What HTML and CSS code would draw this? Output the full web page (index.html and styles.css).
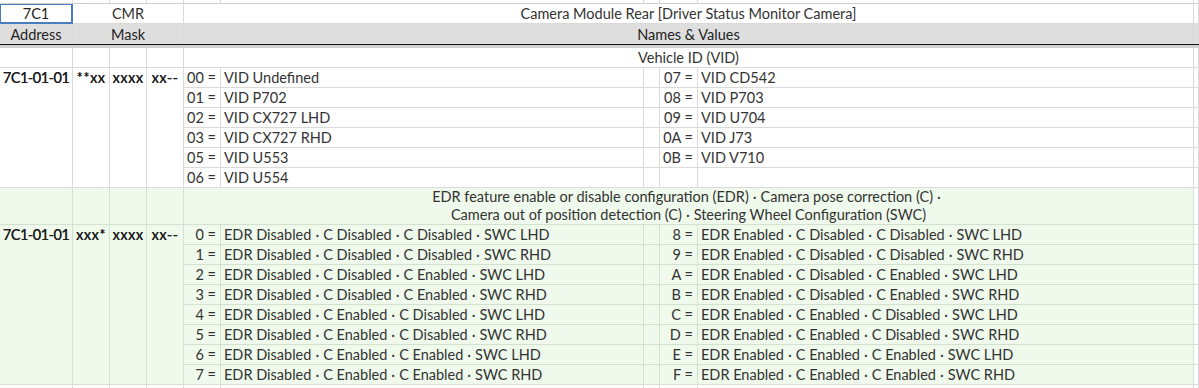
FILE: index.html
```html
<!DOCTYPE html>
<html>
<head>
<meta charset="utf-8">
<link rel="stylesheet" href="styles.css">
</head>
<body>
<div class="sheet">
  <!-- top strip -->
  <div class="c strip"></div><div class="c strip"></div><div class="c strip"></div><div class="c strip"></div><div class="c strip"></div><div class="c strip"></div><div class="c strip"></div><div class="c strip"></div><div class="c strip"></div><div class="c strip"></div>

  <!-- title row -->
  <div class="c ctr sel">7C1</div>
  <div class="c ctr span3">CMR</div>
  <div class="c ctr span5">Camera Module Rear [Driver Status Monitor Camera]</div>
  <div class="c"></div>

  <!-- header row -->
  <div class="c ctr hd">Address</div>
  <div class="c ctr hd span3">Mask</div>
  <div class="c ctr hd span5">Names &amp; Values</div>
  <div class="c hd"></div>

  <!-- separator -->
  <div class="sep"></div>

  <!-- VID heading -->
  <div class="c"></div><div class="c"></div><div class="c"></div><div class="c"></div>
  <div class="c ctr span5">Vehicle ID (VID)</div>
  <div class="c"></div>

  <!-- VID rows -->
  <div class="c ctr k addr top r6">7C1-01-01</div>
  <div class="c ctr k mask top r6">**xx</div>
  <div class="c ctr k mask top r6">xxxx</div>
  <div class="c ctr k mask top r6">xx--</div>
  <div class="c code">00 =</div><div class="c val">VID Undefined</div><div class="c"></div><div class="c code">07 =</div><div class="c val">VID CD542</div><div class="c"></div>
  <div class="c code">01 =</div><div class="c val">VID P702</div><div class="c"></div><div class="c code">08 =</div><div class="c val">VID P703</div><div class="c"></div>
  <div class="c code">02 =</div><div class="c val">VID CX727 LHD</div><div class="c"></div><div class="c code">09 =</div><div class="c val">VID U704</div><div class="c"></div>
  <div class="c code">03 =</div><div class="c val">VID CX727 RHD</div><div class="c"></div><div class="c code">0A =</div><div class="c val">VID J73</div><div class="c"></div>
  <div class="c code">05 =</div><div class="c val">VID U553</div><div class="c"></div><div class="c code">0B =</div><div class="c val">VID V710</div><div class="c"></div>
  <div class="c code">06 =</div><div class="c val">VID U554</div><div class="c"></div><div class="c code"></div><div class="c val"></div><div class="c"></div>

  <!-- EDR heading -->
  <div class="c g"></div><div class="c g"></div><div class="c g"></div><div class="c g"></div>
  <div class="c g ctr span5 two">EDR feature enable or disable configuration (EDR)<span class="d">·</span>Camera pose correction (C)<span class="d">·</span><br>Camera out of position detection (C)<span class="d">·</span>Steering Wheel Configuration (SWC)</div>
  <div class="c"></div>

  <!-- EDR rows -->
  <div class="c g ctr k addr top r8">7C1-01-01</div>
  <div class="c g ctr k mask top r8">xxx*</div>
  <div class="c g ctr k mask top r8">xxxx</div>
  <div class="c g ctr k mask top r8">xx--</div>
  <div class="c g code">0 =</div><div class="c g val">EDR Disabled<span class="d">·</span>C Disabled<span class="d">·</span>C Disabled<span class="d">·</span>SWC LHD</div><div class="c g"></div><div class="c g code">8 =</div><div class="c g val">EDR Enabled<span class="d">·</span>C Disabled<span class="d">·</span>C Disabled<span class="d">·</span>SWC LHD</div><div class="c"></div>
  <div class="c g code">1 =</div><div class="c g val">EDR Disabled<span class="d">·</span>C Disabled<span class="d">·</span>C Disabled<span class="d">·</span>SWC RHD</div><div class="c g"></div><div class="c g code">9 =</div><div class="c g val">EDR Enabled<span class="d">·</span>C Disabled<span class="d">·</span>C Disabled<span class="d">·</span>SWC RHD</div><div class="c"></div>
  <div class="c g code">2 =</div><div class="c g val">EDR Disabled<span class="d">·</span>C Disabled<span class="d">·</span>C Enabled<span class="d">·</span>SWC LHD</div><div class="c g"></div><div class="c g code">A =</div><div class="c g val">EDR Enabled<span class="d">·</span>C Disabled<span class="d">·</span>C Enabled<span class="d">·</span>SWC LHD</div><div class="c"></div>
  <div class="c g code">3 =</div><div class="c g val">EDR Disabled<span class="d">·</span>C Disabled<span class="d">·</span>C Enabled<span class="d">·</span>SWC RHD</div><div class="c g"></div><div class="c g code">B =</div><div class="c g val">EDR Enabled<span class="d">·</span>C Disabled<span class="d">·</span>C Enabled<span class="d">·</span>SWC RHD</div><div class="c"></div>
  <div class="c g code">4 =</div><div class="c g val">EDR Disabled<span class="d">·</span>C Enabled<span class="d">·</span>C Disabled<span class="d">·</span>SWC LHD</div><div class="c g"></div><div class="c g code">C =</div><div class="c g val">EDR Enabled<span class="d">·</span>C Enabled<span class="d">·</span>C Disabled<span class="d">·</span>SWC LHD</div><div class="c"></div>
  <div class="c g code">5 =</div><div class="c g val">EDR Disabled<span class="d">·</span>C Enabled<span class="d">·</span>C Disabled<span class="d">·</span>SWC RHD</div><div class="c g"></div><div class="c g code">D =</div><div class="c g val">EDR Enabled<span class="d">·</span>C Enabled<span class="d">·</span>C Disabled<span class="d">·</span>SWC RHD</div><div class="c"></div>
  <div class="c g code">6 =</div><div class="c g val">EDR Disabled<span class="d">·</span>C Enabled<span class="d">·</span>C Enabled<span class="d">·</span>SWC LHD</div><div class="c g"></div><div class="c g code">E =</div><div class="c g val">EDR Enabled<span class="d">·</span>C Enabled<span class="d">·</span>C Enabled<span class="d">·</span>SWC LHD</div><div class="c"></div>
  <div class="c g code">7 =</div><div class="c g val">EDR Disabled<span class="d">·</span>C Enabled<span class="d">·</span>C Enabled<span class="d">·</span>SWC RHD</div><div class="c g"></div><div class="c g code">F =</div><div class="c g val">EDR Enabled<span class="d">·</span>C Enabled<span class="d">·</span>C Enabled<span class="d">·</span>SWC RHD</div><div class="c"></div>

  <!-- bottom strip -->
  <div class="c strip"></div><div class="c strip"></div><div class="c strip"></div><div class="c strip"></div><div class="c strip"></div><div class="c strip"></div><div class="c strip"></div><div class="c strip"></div><div class="c strip"></div><div class="c strip"></div>
</div>
</body>
</html>
```
FILE: styles.css
```css
html, body {
  margin: 0;
  padding: 0;
  background: #ffffff;
}
body {
  font-family: Lato, "Open Sans", "Liberation Sans", sans-serif;
  font-size: 14.5px;
  color: #333333;
}
.sheet {
  display: grid;
  grid-template-columns: 73px 37px 37px 37px 37px 423px 16px 38px 496px 5px;
  grid-template-rows: 4px 20px 20px 4px 20px repeat(6, 20px) 37px repeat(8, 20px) 3px;
  width: 1199px;
  height: 388px;
  overflow: hidden;
}
.c {
  box-sizing: border-box;
  border-right: 1px solid #dadada;
  border-bottom: 1px solid #dadada;
  display: flex;
  align-items: center;
  white-space: pre;
  overflow: hidden;
  line-height: 19px;
}
.two {
  display: block;
  white-space: normal;
  line-height: 18px;
  text-align: center;
}
.d {
  margin: 0 4px;
}
.strip {
  border-bottom: 1px solid #cfcfcf;
}
.sheet > .strip:nth-last-child(-n+10) {
  border-bottom: none;
}
.ctr { justify-content: center; }
.span3 { grid-column: span 3; }
.span5 { grid-column: span 5; }
.sel {
  border: 2px solid #4a7dc0;
  border-top-width: 1px;
  border-left-width: 1px;
  color: #222;
}
.hd {
  background: #dedede;
  border-bottom: none;
  color: #222;
}
.sep {
  grid-column: 1 / -1;
  border-top: 1px solid #111111;
  background: #d2d2d2;
}
.top {
  align-items: flex-start;
}
.r6 { grid-row: span 6; }
.r8 { grid-row: span 8; }
.k {
  color: #1c1c1c;
  text-shadow: 0.2px 0 0 #1c1c1c;
}
.addr {
  letter-spacing: -0.5px;
}
.mask {
  letter-spacing: 0.5px;
}
.code {
  justify-content: flex-end;
  padding-right: 4px;
}
.val {
  padding-left: 3px;
}
.g {
  background: #effaec;
  border-color: #d3e2cf;
}
```
